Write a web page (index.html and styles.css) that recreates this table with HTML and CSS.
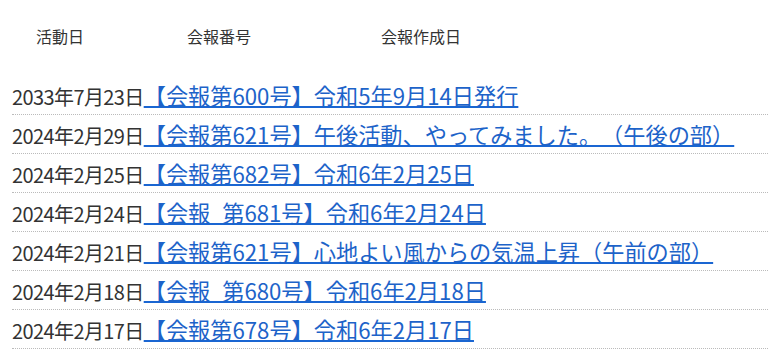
FILE: index.html
```html
<!DOCTYPE html>
<html lang="ja">
<head>
<meta charset="utf-8">
<link rel="stylesheet" href="styles.css">
</head>
<body>
<div class="page">
  <div class="head">
    <span class="h1">活動日</span>
    <span class="h2">会報番号</span>
    <span class="h3">会報作成日</span>
  </div>
  <ul class="list">
    <li class="row"><span class="date">2033年7月23日</span><a class="link" href="#">【会報第600号】令和5年9月14日発行</a></li>
    <li class="row"><span class="date">2024年2月29日</span><a class="link" href="#">【会報第621号】午後活動、やってみました。（午後の部）</a></li>
    <li class="row"><span class="date">2024年2月25日</span><a class="link" href="#">【会報第682号】令和6年2月25日</a></li>
    <li class="row"><span class="date">2024年2月24日</span><a class="link" href="#">【会報 第681号】令和6年2月24日</a></li>
    <li class="row"><span class="date">2024年2月21日</span><a class="link" href="#">【会報第621号】心地よい風からの気温上昇（午前の部）</a></li>
    <li class="row"><span class="date">2024年2月18日</span><a class="link" href="#">【会報 第680号】令和6年2月18日</a></li>
    <li class="row"><span class="date">2024年2月17日</span><a class="link" href="#">【会報第678号】令和6年2月17日</a></li>
  </ul>
</div>
</body>
</html>
```
FILE: styles.css
```css
html, body {
  margin: 0;
  padding: 0;
  background: #fff;
}
body {
  font-family: "Noto Sans CJK JP", "Noto Sans", sans-serif;
  color: #333;
}
.page {
  padding-left: 12px;
}
.head {
  display: grid;
  grid-template-columns: 151px 194px auto;
  padding: 24px 0 0 24px;
  height: 24px;
  line-height: 24px;
  font-size: 16px;
  margin-bottom: 28px;
}
.list {
  list-style: none;
  margin: 0;
  padding: 0;
}
.row {
  height: 38px;
  line-height: 38px;
  border-bottom: 1px dotted #bbb;
  white-space: nowrap;
  text-spacing-trim: space-all;
}
.date {
  color: #333;
  font-size: 20px;
  letter-spacing: -0.6px;
}
.link {
  font-size: 22.2px;
  word-spacing: 7px;
  color: #1d63c9;
  text-decoration: underline;
  text-decoration-thickness: 2px;
  text-decoration-color: #1a66d2;
}
```
